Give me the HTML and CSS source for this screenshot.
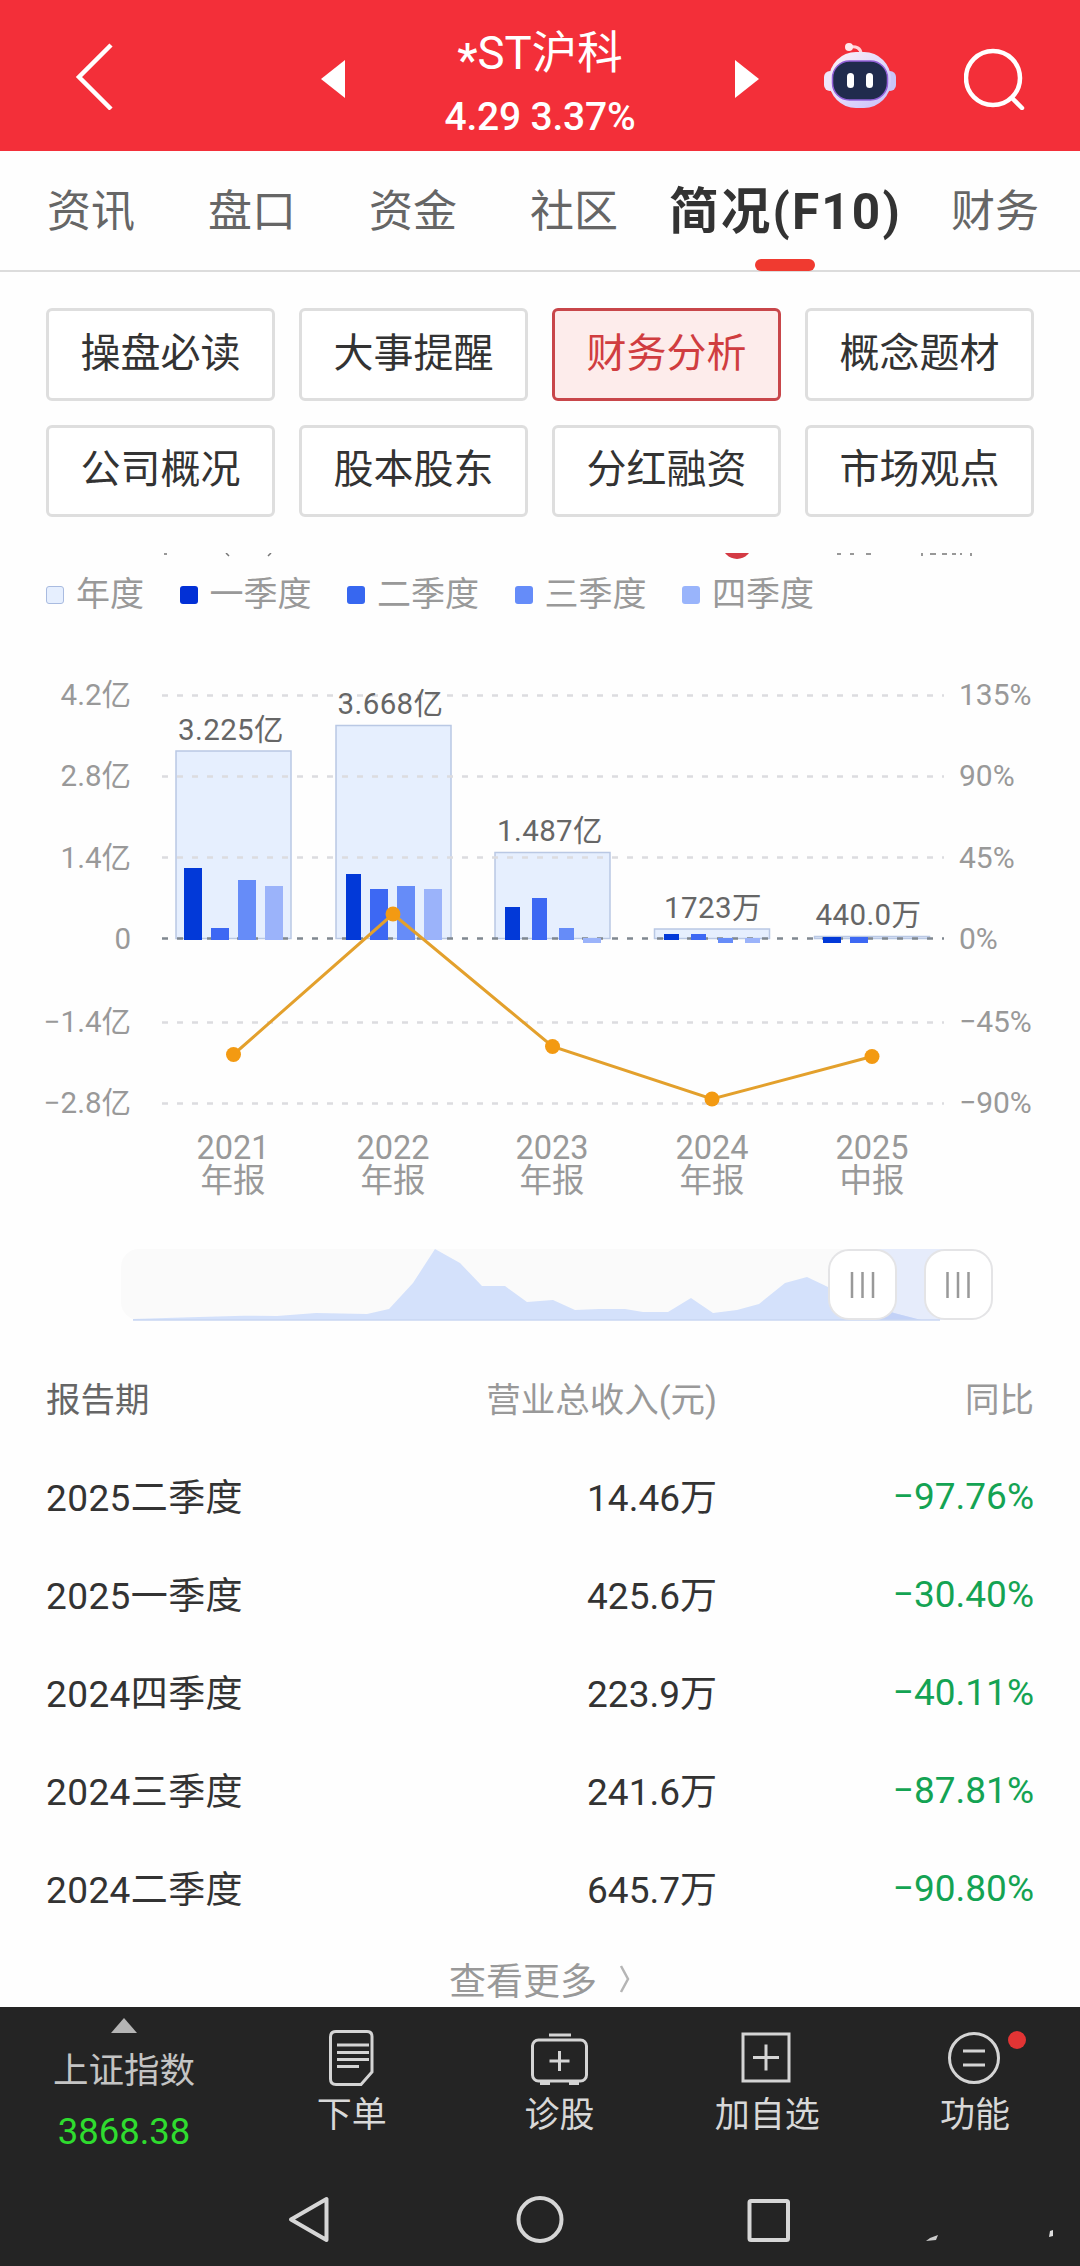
FILE: index.html
```
<!DOCTYPE html>
<html lang="zh-CN">
<head>
    <meta charset="UTF-8">
    <meta name="viewport" content="width=device-width, initial-scale=1.0">
    <title>*ST沪科 财务分析</title>
    <link rel="stylesheet" href="styles.css">
</head>
<body>
    <header class="top-bar">
        <svg class="icon-back" width="40" height="68" viewBox="0 0 40 68"><path d="M37 3 L5 35 L37 67" /></svg>
        <svg class="icon-prev" width="24" height="38" viewBox="0 0 24 38"><path d="M24 0 V38 L0 19 Z" /></svg>
        <div class="stock">
            <h1 class="stock-name"><span class="star">*</span>ST沪科</h1>
            <p class="stock-price">4.29 3.37%</p>
        </div>
        <svg class="icon-next" width="24" height="38" viewBox="0 0 24 38"><path d="M0 0 V38 L24 19 Z" /></svg>
        <svg class="icon-robot" width="74" height="68" viewBox="0 0 74 68">
            <defs>
                <linearGradient id="head" x1="0" y1="0" x2="1" y2="1">
                    <stop offset="0" stop-color="#fff1f4" />
                    <stop offset="0.5" stop-color="#e3dcfb" />
                    <stop offset="1" stop-color="#c5bdf8" />
                </linearGradient>
            </defs>
            <path d="M38 12 C38 6 33 4 27 5" fill="none" stroke="#ffd5da" stroke-width="3" />
            <circle cx="26" cy="5" r="4" fill="#ffe9ec" />
            <rect x="1" y="29" width="12" height="20" rx="6" fill="#efe6fb" />
            <rect x="61" y="29" width="12" height="20" rx="6" fill="#c9c6f8" />
            <rect x="6" y="10" width="62" height="56" rx="27" fill="url(#head)" />
            <rect x="9.500" y="19" width="55" height="39" rx="17" fill="#202b4d" stroke="#9260d8" stroke-width="1.500" />
            <rect x="24" y="31" width="7" height="15" rx="3.500" fill="#fff" />
            <rect x="43" y="31" width="7" height="15" rx="3.500" fill="#fff" />
        </svg>
        <svg class="icon-search" width="62" height="62" viewBox="0 0 62 62"><circle cx="29" cy="30" r="27" /><path d="M48 50 L58 60" /></svg>
    </header>

    <nav class="tabs">
        <span class="tab">资讯</span>
        <span class="tab">盘口</span>
        <span class="tab">资金</span>
        <span class="tab">社区</span>
        <span class="tab active">简况(F10)</span>
        <span class="tab">财务</span>
    </nav>

    <main>
        <section class="sub-menu">
            <button class="sub-item">操盘必读</button>
            <button class="sub-item">大事提醒</button>
            <button class="sub-item selected">财务分析</button>
            <button class="sub-item">概念题材</button>
            <button class="sub-item">公司概况</button>
            <button class="sub-item">股本股东</button>
            <button class="sub-item">分红融资</button>
            <button class="sub-item">市场观点</button>
        </section>

        <!-- borde inferior de la fila que queda bajo el menú -->
        <svg class="scrolled-row" width="1080" height="8" viewBox="0 0 1080 8">
            <circle cx="737" cy="-9" r="15" fill="#d43a44" />
            <path d="M164 1h3 M226 0l3 3 M271 0l-3 3 M837 1h4 M850 1h4 M866 1h5 M922 0v3 M930 1h6 M942 1h5 M952 1h4 M961 0v2 M971 0v3" fill="none" stroke="#777" stroke-width="1.500" />
        </svg>

        <ul class="legend">
            <li><i class="swatch year"></i>年度</li>
            <li><i class="swatch q1"></i>一季度</li>
            <li><i class="swatch q2"></i>二季度</li>
            <li><i class="swatch q3"></i>三季度</li>
            <li><i class="swatch q4"></i>四季度</li>
        </ul>

        <svg class="chart" width="1080" height="560" viewBox="0 660 1080 560">
            <g class="year-bars">
                <rect x="176" y="751" width="115" height="187.500" />
                <rect x="336" y="725.500" width="115" height="213" />
                <rect x="495" y="852.500" width="115" height="86" />
                <rect x="654.500" y="929" width="115" height="9.500" />
                <rect x="814.500" y="936.500" width="115" height="2" />
            </g>
            <g class="grid">
                <path d="M162 695.500H944 M162 776.500H944 M162 857.500H944 M162 1022.500H944 M162 1103.500H944" />
                <path class="zero" d="M162 938.500H944" />
            </g>
            <g class="q1">
                <rect x="184" y="868" width="18" height="72" />
                <rect x="346" y="874" width="15" height="66" />
                <rect x="505" y="907" width="15" height="33" />
                <rect x="664" y="934" width="15" height="6" />
                <rect x="823" y="937" width="18" height="6" />
            </g>
            <g class="q2">
                <rect x="211" y="928" width="18" height="12" />
                <rect x="370" y="889" width="18" height="51" />
                <rect x="532" y="898" width="15" height="42" />
                <rect x="691" y="934" width="15" height="6" />
                <rect x="850" y="937" width="18" height="6" />
            </g>
            <g class="q3">
                <rect x="238" y="880" width="18" height="60" />
                <rect x="397" y="886" width="18" height="54" />
                <rect x="559" y="928" width="15" height="12" />
                <rect x="718" y="938" width="15" height="5" />
            </g>
            <g class="q4">
                <rect x="265" y="886" width="18" height="54" />
                <rect x="424" y="889" width="18" height="51" />
                <rect x="583" y="938" width="18" height="5" />
                <rect x="745" y="938" width="15" height="5" />
            </g>
            <g class="trend">
                <polyline points="233.500,1054.500 393,914 552.500,1046.500 712,1099 872,1056.500" />
                <circle cx="233.500" cy="1054.500" r="7.500" />
                <circle cx="393" cy="914" r="7.500" />
                <circle cx="552.500" cy="1046.500" r="7.500" />
                <circle cx="712" cy="1099" r="7.500" />
                <circle cx="872" cy="1056.500" r="7.500" />
            </g>
            <g class="axis left">
                <text x="131" y="705">4.2亿</text>
                <text x="131" y="786">2.8亿</text>
                <text x="131" y="868">1.4亿</text>
                <text x="131" y="949">0</text>
                <text x="131" y="1032">−1.4亿</text>
                <text x="131" y="1113">−2.8亿</text>
            </g>
            <g class="axis right">
                <text x="959" y="705">135%</text>
                <text x="959" y="786">90%</text>
                <text x="959" y="868">45%</text>
                <text x="959" y="949">0%</text>
                <text x="959" y="1032">−45%</text>
                <text x="959" y="1113">−90%</text>
            </g>
            <g class="values">
                <text x="231" y="740">3.225亿</text>
                <text x="390.500" y="714">3.668亿</text>
                <text x="550" y="841">1.487亿</text>
                <text x="713" y="918">1723万</text>
                <text x="868.500" y="925">440.0万</text>
            </g>
            <g class="years">
                <text x="233" y="1159">2021</text><text x="233" y="1192">年报</text>
                <text x="393" y="1159">2022</text><text x="393" y="1192">年报</text>
                <text x="552" y="1159">2023</text><text x="552" y="1192">年报</text>
                <text x="712" y="1159">2024</text><text x="712" y="1192">年报</text>
                <text x="872" y="1159">2025</text><text x="872" y="1192">中报</text>
            </g>
        </svg>

        <svg class="range" width="1080" height="80" viewBox="0 1245 1080 80">
            <rect x="121" y="1249" width="870" height="71" rx="18" fill="#fafafa" />
            <rect x="862" y="1249" width="96" height="71" fill="#e6ecfb" />
            <path d="M133 1319 L166 1318 L199 1317 L244 1315.700 L277 1316 L316 1313 L367 1314 L389 1309 L413 1283 L435 1249 L460 1263 L482 1286 L505 1286 L527 1302 L553 1300 L575 1310 L599 1309 L625 1309 L643 1312 L668 1312 L691 1298 L713 1313 L737 1310 L759 1304 L785 1283 L807 1277 L828 1287 L894 1313 L921 1320 L133 1320 Z" fill="#d4e1fb" />
            <path d="M880 1308 L894 1313 L921 1320 H880 Z" fill="#c3d2f7" />
            <path d="M133 1320 H940" stroke="#c9d6f2" stroke-width="1.500" />
            <g class="handle">
                <rect x="829" y="1250" width="67" height="69" rx="20" />
                <path d="M852 1272V1298 M862.500 1272V1298 M873 1272V1298" />
                <rect x="925" y="1250" width="67" height="69" rx="20" />
                <path d="M947.500 1272V1298 M958 1272V1298 M968.500 1272V1298" />
            </g>
        </svg>

        <table class="report">
            <thead>
                <tr><th>报告期</th><th>营业总收入(元)</th><th>同比</th></tr>
            </thead>
            <tbody>
                <tr><td>2025二季度</td><td>14.46万</td><td>−97.76%</td></tr>
                <tr><td>2025一季度</td><td>425.6万</td><td>−30.40%</td></tr>
                <tr><td>2024四季度</td><td>223.9万</td><td>−40.11%</td></tr>
                <tr><td>2024三季度</td><td>241.6万</td><td>−87.81%</td></tr>
                <tr><td>2024二季度</td><td>645.7万</td><td>−90.80%</td></tr>
            </tbody>
        </table>

        <div class="more">
            查看更多
            <svg width="12" height="28" viewBox="0 0 12 28"><path d="M2 1 L9 14 L2 27" /></svg>
        </div>
    </main>

    <footer>
        <div class="toolbar">
            <div class="index">
                <svg width="26" height="15" viewBox="0 0 26 15"><path d="M13 0 L26 15 H0 Z" /></svg>
                <span class="index-name">上证指数</span>
                <span class="index-value">3868.38</span>
            </div>
            <div class="tool">
                <svg width="60" height="60" viewBox="0 0 60 60">
                    <path d="M14 4.500 H45 Q50 4.500 50 9.500 V45 L39 57.500 H14 Q8.500 57.500 8.500 52 V10 Q8.500 4.500 14 4.500 Z" />
                    <path d="M15 18H47 M15 25.500H47 M15 32.500H47 M15 39.500H37" />
                </svg>
                <span>下单</span>
            </div>
            <div class="tool">
                <svg width="60" height="60" viewBox="0 0 60 60">
                    <rect x="2.500" y="13" width="54" height="41" rx="6" />
                    <path d="M19 8H41 M29.500 24V44 M19.500 34H39.500" />
                    <path d="M10 56H20 M39 56H49" stroke-width="4" />
                </svg>
                <span>诊股</span>
            </div>
            <div class="tool">
                <svg width="60" height="60" viewBox="0 0 60 60">
                    <rect x="6" y="7" width="46" height="47" />
                    <path d="M29 17.500V43.500 M16 30.500H42" />
                </svg>
                <span>加自选</span>
            </div>
            <div class="tool">
                <svg width="60" height="60" viewBox="0 0 60 60">
                    <circle cx="29" cy="31" r="24.500" />
                    <path d="M18 24H40 M18 38H40" />
                </svg>
                <i class="dot"></i>
                <span>功能</span>
            </div>
        </div>
        <svg class="system-nav" width="1080" height="80" viewBox="0 2180 1080 80">
            <path d="M326.500 2199 V2240 L291 2219.500 Z" />
            <circle cx="540" cy="2219.500" r="21.500" />
            <rect x="749.500" y="2201" width="38.500" height="39" rx="1.500" />
            <path d="M926 2241 L936 2240 L938 2235 L930 2238 Z" fill="#ccc" stroke="none" />
            <path d="M1049 2237 L1053 2236 V2230 L1050 2231 Z" fill="#ddd" stroke="none" />
        </svg>
    </footer>
</body>
</html>
```
FILE: styles.css
```
* {
    box-sizing: border-box;
}

body {
    margin: 0;
    width: 1080px;
    height: 2266px;
    display: flex;
    flex-direction: column;
    background-color: #fefefe;
    font-family: Roboto, "Noto Sans CJK SC", sans-serif;
    color: #333;
    overflow: hidden;
}

svg {
    display: block;
    flex: none;
}

/* Cabecera roja */
.top-bar {
    height: 151px;
    flex: none;
    display: flex;
    align-items: flex-start;
    background-color: #f32f39;
    color: #fff;
}

.icon-back {
    margin: 42px 0 0 74px;
    fill: none;
    stroke: #fff;
    stroke-width: 4.5;
}

.icon-prev,
.icon-next {
    margin-top: 60px;
    fill: #fff;
}

.icon-prev {
    margin-left: 207px;
}

.stock {
    width: 390px;
    padding-top: 21px;
    text-align: center;
}

.stock-name {
    margin: 0;
    font-size: 45.5px;
    font-weight: 400;
    line-height: 66px;
}

.star {
    display: inline-block;
    font-weight: 500;
    transform: translateY(7px);
}

.stock-price {
    margin: 0;
    font-size: 39px;
    font-weight: 500;
    line-height: 61px;
    letter-spacing: -0.2px;
}

.icon-robot {
    margin: 42px 0 0 64px;
}

.icon-search {
    margin: 48px 0 0 67px;
    fill: none;
    stroke: #fff;
    stroke-width: 4.5;
    stroke-linecap: round;
}

/* Pestañas */
.tabs {
    height: 121px;
    flex: none;
    display: flex;
    align-items: center;
    padding-left: 47px;
    border-bottom: 2px solid #dcdcdc;
    white-space: nowrap;
}

.tab {
    flex: none;
    margin-right: 73px;
    padding-top: 2px;
    font-size: 44px;
    line-height: 118px;
    color: #666;
}

.tab:nth-child(4) {
    margin-right: 51px;
}

.tab.active {
    position: relative;
    width: 231px;
    margin-right: 51px;
    font-size: 49.5px;
    font-weight: 700;
    letter-spacing: 2.2px;
    color: #333;
}

.tab.active::after {
    content: "";
    position: absolute;
    left: 86px;
    bottom: 0;
    width: 60px;
    height: 12px;
    border-radius: 6px;
    background-color: #f03a30;
}

/* Submenú */
.sub-menu {
    display: grid;
    grid-template-columns: repeat(4, 1fr);
    gap: 24px;
    padding: 36px 46px 0;
}

.sub-item {
    height: 92.5px;
    padding: 0 0 9px;
    border: 3px solid #dedede;
    border-radius: 6px;
    background-color: #fff;
    font-family: inherit;
    font-size: 40px;
    color: #333;
}

.sub-item.selected {
    border-color: #c8464a;
    background-color: #fdeceb;
    color: #d03d40;
}

.scrolled-row {
    margin-top: 36px;
}

/* Leyenda */
.legend {
    display: flex;
    gap: 35.5px;
    height: 50px;
    margin: 8px 0 0;
    padding: 0 46px;
    list-style: none;
    font-size: 34px;
    line-height: 50px;
    color: #999;
}

.legend li {
    display: flex;
    gap: 12px;
}

.swatch {
    width: 18px;
    height: 18px;
    margin-top: 17px;
    border-radius: 3px;
}

.swatch.year {
    background-color: #e6effe;
    border: 1px solid #a9bbe0;
}

.swatch.q1 {
    background-color: #0230d6;
}

.swatch.q2 {
    background-color: #3767f0;
}

.swatch.q3 {
    background-color: #658cf9;
}

.swatch.q4 {
    background-color: #99b4fb;
}

/* Gráfico */
.chart {
    margin-top: 41px;
}

.year-bars rect {
    fill: #e6effe;
    stroke: #b9c8e4;
    stroke-width: 1.5;
}

.grid path {
    fill: none;
    stroke: #dcdcdf;
    stroke-width: 2.5;
    stroke-dasharray: 6 9;
}

.grid .zero {
    stroke: #808890;
}

.chart .q1 {
    fill: #0239d8;
}

.chart .q2 {
    fill: #3d68f3;
}

.chart .q3 {
    fill: #668cf8;
}

.chart .q4 {
    fill: #9bb3fa;
}

.trend polyline {
    fill: none;
    stroke: #e3a02c;
    stroke-width: 3;
}

.trend circle {
    fill: #f39a12;
}

.axis {
    font-size: 30px;
    fill: #999;
}

.axis.left {
    font-size: 29.5px;
    text-anchor: end;
}

.values {
    font-size: 29.5px;
    letter-spacing: 0.4px;
    text-anchor: middle;
    fill: #666;
}

.years {
    font-size: 32.5px;
    text-anchor: middle;
    fill: #999;
}

.range {
    margin-top: 25px;
}

.handle rect {
    fill: #fff;
    stroke: #e4e4e6;
    stroke-width: 2;
}

.handle path {
    stroke: #999;
    stroke-width: 2.5;
}

/* Tabla */
.report {
    width: 988px;
    margin: 23px 46px 0;
    border-collapse: collapse;
    table-layout: fixed;
}

.report th,
.report td {
    height: 98px;
    padding: 0;
    text-align: right;
    font-weight: 400;
    font-size: 37px;
}

.report th {
    font-size: 34.5px;
    color: #999;
}

.report th:first-child,
.report td:first-child {
    width: 330px;
    text-align: left;
}

.report th:first-child {
    color: #666;
}

.report td:first-child {
    letter-spacing: 0.4px;
}

.report th:nth-child(2) {
    width: 341px;
}

.report td:last-child {
    padding-top: 2px;
    color: #14a353;
}

.more {
    display: flex;
    justify-content: center;
    align-items: center;
    gap: 22px;
    height: 68px;
    margin-top: 9px;
    font-size: 37px;
    color: #999;
}

.more path {
    fill: none;
    stroke: #b5b5b5;
    stroke-width: 2.5;
}

/* Barra inferior */
footer {
    position: absolute;
    top: 2007px;
    width: 1080px;
    height: 259px;
    background-color: #242424;
}

.toolbar {
    height: 173px;
    display: grid;
    grid-template-columns: 248px repeat(4, 207.7px);
    color: #d8d8d8;
}

.index {
    display: flex;
    flex-direction: column;
    align-items: center;
    padding-top: 11px;
}

.index path {
    fill: #b5b5b5;
}

.index-name {
    margin-top: 8px;
    font-size: 35.5px;
    line-height: 60px;
    color: #c4c4c4;
}

.index-value {
    font-size: 36.5px;
    line-height: 62px;
    color: #2fdc2f;
}

.tool {
    position: relative;
    display: flex;
    flex-direction: column;
    align-items: center;
    padding-top: 20px;
    font-size: 35px;
    line-height: 58px;
}

.tool svg {
    fill: none;
    stroke: #d4d4d4;
    stroke-width: 3;
}

.dot {
    position: absolute;
    left: 137px;
    top: 24px;
    width: 18px;
    height: 18px;
    border-radius: 50%;
    background-color: #e23434;
}

.system-nav {
    fill: none;
    stroke: #d6d6d6;
    stroke-width: 4;
    stroke-linejoin: round;
}
```
